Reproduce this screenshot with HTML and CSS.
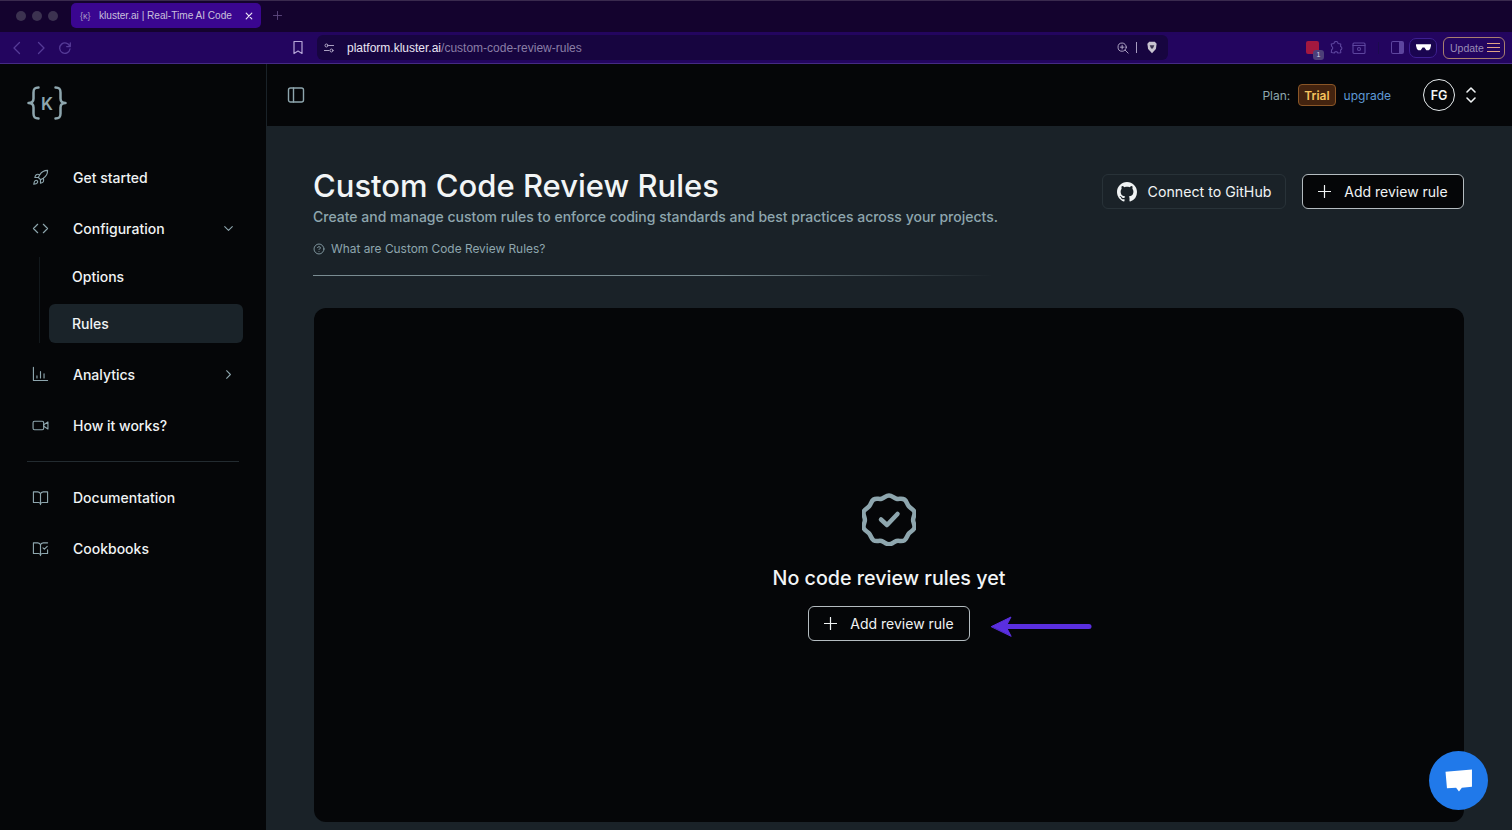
FILE: index.html
```html
<!DOCTYPE html>
<html>
<head>
  <title>kluster.ai | Real-Time AI Code Review</title>
  <link rel="stylesheet" href="styles.css">
</head>
<body>
  <div class="browser">
    <div class="tabbar">
      <div class="lights"><span></span><span></span><span></span></div>
      <div class="tab">
        <span class="tab-icon">{κ}</span>
        <span class="tab-title">kluster.ai | Real-Time AI Code</span>
        <svg class="tab-close" viewBox="0 0 10 10"><path d="M1.5 1.5l7 7M8.5 1.5l-7 7"/></svg>
      </div>
      <svg class="tab-new" viewBox="0 0 10 10"><path d="M5 .5v9M.5 5h9"/></svg>
    </div>
    <div class="toolbar">
      <div class="nav-btns">
        <svg viewBox="0 0 14 14"><path d="M9.5 1.5L4 7l5.5 5.5"/></svg>
        <svg viewBox="0 0 14 14"><path d="M4.5 1.5L10 7l-5.5 5.5"/></svg>
        <svg viewBox="0 0 14 14"><path d="M11.8 5.5A5.2 5.2 0 1 0 12 8M12.3 1.8v3.8H8.7"/></svg>
      </div>
      <svg class="bookmark" viewBox="0 0 12 15"><path d="M2 1.5h8v12L6 11l-4 2.500z"/></svg>
      <div class="urlbar">
        <svg class="url-tune" viewBox="0 0 12 12"><circle cx="3" cy="3" r="1.8"/><path d="M6 3h5.500M.5 9H6"/><circle cx="9" cy="9" r="1.8"/></svg>
        <span class="url"><b>platform.kluster.ai</b>/custom-code-review-rules</span>
        <svg class="url-zoom" viewBox="0 0 14 14"><circle cx="6" cy="6" r="4.8"/><path d="M9.5 9.5L13 13M6 3.8v4.4M3.8 6h4.4"/></svg>
        <span class="url-sep"></span>
        <svg class="url-shield" viewBox="0 0 12 14"><path d="M3 .8h6l2 2.2-.8 5.5L6 13.200 1.800 8.500 1 3z"/><path class="lion" d="M3.5 4.500h5L7 8H5z"/></svg>
      </div>
      <div class="extensions">
        <span class="ext-red"><span class="ext-badge">1</span></span>
        <svg class="ext-icon" viewBox="0 0 14 14"><path d="M5 2.500a2 2 0 0 1 4 0l2.800.5-.3 2.500a1.800 1.800 0 0 1 0 3.500l.3 2.800-3 .2a1.800 1.800 0 0 0-3.500 0l-3-.5.300-2.800a1.900 1.900 0 0 0 0-3.500L2.200 3z"/></svg>
        <svg class="ext-icon" viewBox="0 0 14 14"><rect x="1" y="2" width="12" height="10.5" rx="1"/><path d="M1 4.500h12"/><circle cx="7" cy="8" r="1.5"/></svg>
        <span class="ext-sep"></span>
        <span class="ext-panel"></span>
        <span class="ext-glasses">
          <svg viewBox="0 0 16 7"><path d="M0 0h16v1.500l-1 3.500-1.500 1.500H11L9 3.500H7L5 6.500H2.500L1 5 0 1.500z"/></svg>
        </span>
        <span class="ext-update">Update
          <span class="burger"><i></i><i></i><i></i></span>
        </span>
      </div>
    </div>
  </div>

  <div class="app">
    <aside class="sidebar">
      <div class="logo">
        <svg viewBox="0 0 40 34">
          <path d="M11.5 1.500C7.500 1.500 6.500 3 6.500 6.500v6c0 3-1.500 4.500-5 4.500 3.500 0 5 1.500 5 4.500v6c0 3.500 1 5 5 5"/>
          <path d="M28.500 1.500c4 0 5 1.500 5 5v6c0 3 1.500 4.500 5 4.500-3.500 0-5 1.500-5 4.500v6c0 3.500-1 5-5 5"/>
          <text class="logo-k" x="20" y="23.500">K</text>
        </svg>
      </div>
      <nav class="nav">
        <a class="nav-item">
          <svg class="nav-icon" viewBox="0 0 24 24"><path d="M4.5 16.500c-1.500 1.260-2 5-2 5s3.740-.5 5-2c.71-.84.7-2.130-.09-2.910a2.180 2.180 0 0 0-2.910-.09z"/><path d="M12 15l-3-3a22 22 0 0 1 2-3.950A12.880 12.880 0 0 1 22 2c0 2.720-.78 7.500-6 11a22.350 22.350 0 0 1-4 2z"/><path d="M9 12H4s.55-3.030 2-4c1.620-1.080 5 0 5 0M12 15v5s3.030-.55 4-2c1.080-1.620 0-5 0-5"/></svg>
          <span>Get started</span>
        </a>
        <a class="nav-item">
          <svg class="nav-icon" viewBox="0 0 24 24"><path d="M8 6l-6 6 6 6M16 6l6 6-6 6"/></svg>
          <span>Configuration</span>
          <svg class="nav-chevron" viewBox="0 0 24 24"><path d="M5 8.500l7 7 7-7"/></svg>
        </a>
        <div class="subnav">
          <a class="sub-item">Options</a>
          <a class="sub-item active">Rules</a>
        </div>
        <a class="nav-item">
          <svg class="nav-icon" viewBox="0 0 24 24"><path d="M2 2v18.500h20M7 14v3M12 8v9M17 11v6"/></svg>
          <span>Analytics</span>
          <svg class="nav-chevron" viewBox="0 0 24 24"><path d="M8.500 5l7 7-7 7"/></svg>
        </a>
        <a class="nav-item">
          <svg class="nav-icon" viewBox="0 0 24 24"><rect x="1.500" y="6" width="15" height="12" rx="2"/><path d="M16.500 11l6-4v10l-6-4z"/></svg>
          <span>How it works?</span>
        </a>
        <div class="nav-divider"></div>
        <a class="nav-item">
          <svg class="nav-icon" viewBox="0 0 24 24"><path d="M12 7a4 4 0 0 0-4-3H2v15h7a3 3 0 0 1 3 2.500 3 3 0 0 1 3-2.500h7V4h-6a4 4 0 0 0-4 3zM12 7v15"/></svg>
          <span>Documentation</span>
        </a>
        <a class="nav-item">
          <svg class="nav-icon" viewBox="0 0 24 24"><path d="M12 7a4 4 0 0 0-4-3H2v15h7a3 3 0 0 1 3 2.500 3 3 0 0 1 3-2.500h7v-5M22 4h-6a4 4 0 0 0-4 3v15M15.500 11l2 2 4-4"/></svg>
          <span>Cookbooks</span>
        </a>
      </nav>
    </aside>

    <div class="content">
      <header class="topbar">
        <svg class="panel-toggle" viewBox="0 0 18 18"><rect x="1.500" y="2" width="15" height="14" rx="2"/><path d="M6.500 2v14"/></svg>
        <div class="plan">
          <span class="plan-label">Plan:</span>
          <span class="plan-badge">Trial</span>
          <a class="plan-upgrade">upgrade</a>
        </div>
        <span class="avatar">FG</span>
        <svg class="avatar-toggle" viewBox="0 0 12 20"><path d="M2 7l4-4 4 4M2 13l4 4 4-4"/></svg>
      </header>

      <main class="page">
        <div class="page-head">
          <div class="page-intro">
            <h1>Custom Code Review Rules</h1>
            <p class="page-sub">Create and manage custom rules to enforce coding standards and best practices across your projects.</p>
            <a class="page-help">
              <svg viewBox="0 0 14 14"><circle cx="7" cy="7" r="5.800"/><path d="M5.300 5.400a1.750 1.750 0 0 1 3.400.5c0 1.100-1.700 1.500-1.700 1.500M7 9.900h.01"/></svg>
              What are Custom Code Review Rules?
            </a>
          </div>
          <div class="page-actions">
            <button class="btn btn-ghost">
              <svg class="gh" viewBox="0 0 16 16"><path d="M8 0C3.580 0 0 3.580 0 8c0 3.540 2.290 6.530 5.470 7.590.4.070.55-.17.55-.38 0-.19-.01-.82-.01-1.490-2.010.37-2.530-.49-2.690-.94-.09-.23-.48-.94-.82-1.130-.28-.15-.68-.52-.01-.53.63-.01 1.080.58 1.230.82.72 1.210 1.870.87 2.330.66.07-.52.28-.87.51-1.070-1.780-.2-3.640-.89-3.640-3.950 0-.87.31-1.590.82-2.150-.08-.2-.36-1.020.08-2.120 0 0 .67-.21 2.200.82.64-.18 1.320-.27 2-.27s1.360.09 2 .27c1.530-1.040 2.200-.82 2.200-.82.44 1.100.16 1.920.08 2.120.51.56.82 1.270.82 2.150 0 3.070-1.870 3.750-3.650 3.950.29.25.54.73.54 1.480 0 1.070-.01 1.930-.01 2.200 0 .21.15.46.55.38A8.010 8.010 0 0 0 16 8c0-4.420-3.580-8-8-8z"/></svg>
              Connect to GitHub
            </button>
            <button class="btn btn-dark">
              <svg class="plus" viewBox="0 0 14 14"><path d="M7 .5v13M.5 7h13"/></svg>
              Add review rule
            </button>
          </div>
        </div>
        <div class="page-rule"></div>

        <section class="empty-card">
          <svg class="empty-badge" viewBox="0 0 54 54"><path d="M27 3.500c3 0 4.800 2.700 7.400 3.300 2.700.6 5.600-.8 8 .7 2.400 1.500 2.600 4.700 4.400 6.800 1.800 2.100 4.900 2.900 5.600 5.700.7 2.700-1.300 5.100-1.300 7.900s2 5.200 1.300 7.900c-.7 2.800-3.800 3.600-5.600 5.700-1.800 2.100-2 5.300-4.400 6.800-2.400 1.500-5.300.1-8 .7-2.600.6-4.400 3.300-7.400 3.300s-4.800-2.700-7.400-3.300c-2.700-.6-5.600.8-8-.7-2.400-1.500-2.600-4.700-4.400-6.800-1.800-2.100-4.900-2.900-5.600-5.700-.7-2.700 1.300-5.100 1.300-7.900s-2-5.200-1.300-7.900c.7-2.800 3.800-3.600 5.600-5.700 1.800-2.100 2-5.300 4.400-6.800 2.400-1.500 5.300-.1 8-.7 2.600-.6 4.400-3.300 7.400-3.300z"/><path d="M19 27.500l6 5.500 10.500-11"/></svg>
          <h2>No code review rules yet</h2>
          <div class="empty-action">
            <button class="btn btn-dark btn-small">
              <svg class="plus" viewBox="0 0 14 14"><path d="M7 .5v13M.5 7h13"/></svg>
              Add review rule
            </button>
            <svg class="arrow" viewBox="0 0 102 22"><path class="arrow-line" d="M10 11.500h89"/><path class="arrow-head" d="M1.500 11.500L21 2 16 11.500 21 21z"/></svg>
          </div>
        </section>
      </main>
    </div>
  </div>

  <button class="chat">
    <svg viewBox="0 0 30 26"><path d="M1.500 4L29 1.500V19.500L18.500 20.500 15.500 24.500 12.500 20.500 3 21z"/></svg>
  </button>
</body>
</html>
```

FILE: styles.css
```css
* {
  box-sizing: border-box;
}
html, body {
  height: 100%;
}
body {
  margin: 0;
  height: 830px;
  overflow: hidden;
  background: #050608;
  font-family: Inter, "Open Sans", sans-serif;
  color: #f2f5f6;
  display: flex;
  flex-direction: column;
}
svg {
  display: block;
  flex: none;
  fill: none;
  stroke: currentColor;
  stroke-linecap: round;
  stroke-linejoin: round;
}
button {
  font-family: inherit;
  cursor: pointer;
}

/* browser chrome */
.browser {
  flex: none;
}
.tabbar {
  height: 32px;
  background: #14032e;
  display: flex;
  align-items: center;
  padding: 0 0 1px 16px;
  box-shadow: inset 0 1px 0 #3a2a4e;
}
.lights {
  display: flex;
  gap: 6px;
  margin-right: 13px;
}
.lights span {
  width: 10px;
  height: 10px;
  border-radius: 50%;
  background: #3c3250;
}
.tab {
  width: 190px;
  height: 25px;
  background: #3a0690;
  border-radius: 5px;
  display: flex;
  align-items: center;
  padding: 0 8px 0 9px;
  font-family: "Liberation Sans", sans-serif;
  font-size: 10.1px;
  color: #c9c0dc;
}
.tab-icon {
  width: 19px;
  font-size: 9px;
  color: #a99ac6;
}
.tab-title {
  flex: 1;
  white-space: nowrap;
}
.tab-close {
  width: 8px;
  height: 8px;
  margin-left: 9px;
  color: #ece6f6;
  stroke-width: 1.5;
}
.tab-new {
  width: 9px;
  height: 9px;
  margin-left: 12px;
  color: #5d4a80;
  stroke-width: 1;
}
.toolbar {
  height: 32px;
  background: #23055f;
  border-bottom: 1px solid #452a84;
  display: flex;
  align-items: center;
  padding: 0 7px 0 10px;
}
.nav-btns {
  display: flex;
  gap: 10px;
  width: 282px;
  color: #553b97;
}
.nav-btns svg {
  width: 14px;
  height: 14px;
  stroke-width: 1.3;
}
.bookmark {
  width: 12px;
  height: 15px;
  color: #b6a6d8;
  stroke-width: 1.2;
}
.urlbar {
  width: 851px;
  height: 25px;
  margin-left: 13px;
  background: #170540;
  border-radius: 6px;
  display: flex;
  align-items: center;
  padding: 0 10px 0 7px;
  font-family: "Liberation Sans", sans-serif;
}
.url-tune {
  width: 10px;
  height: 10px;
  color: #c9c0dc;
  stroke-width: 1;
}
.url {
  flex: 1;
  margin-left: 13px;
  font-size: 12px;
  color: #8a7ea6;
}
.url b {
  font-weight: 400;
  color: #ebe6f4;
}
.url-zoom {
  width: 12px;
  height: 12px;
  color: #c2b9d6;
  stroke-width: 1;
}
.url-sep {
  width: 1px;
  height: 11px;
  margin: 0 9px 0 7px;
  background: #a79cc0;
}
.url-shield {
  width: 12px;
  height: 13px;
  fill: #c8c4d0;
  stroke: none;
}
.url-shield .lion {
  fill: #3b3550;
}
.extensions {
  flex: 1;
  display: flex;
  align-items: center;
  justify-content: flex-end;
}
.ext-red {
  position: relative;
  width: 13px;
  height: 13px;
  background: #a3183f;
  border-radius: 2px;
  margin-right: 6px;
}
.ext-badge {
  position: absolute;
  right: -5px;
  bottom: -6px;
  width: 11px;
  height: 10px;
  border-radius: 3px;
  background: #4c3f78;
  color: #d9d4e6;
  font-size: 7px;
  line-height: 10px;
  text-align: center;
  font-family: "Liberation Sans", sans-serif;
}
.ext-icon {
  width: 14px;
  height: 14px;
  margin-left: 4px;
  margin-right: 5px;
  color: #5d459e;
  stroke-width: 1.1;
}
.ext-sep {
  width: 1px;
  height: 12px;
  margin: 0 12px 0 7px;
  background: #1c0b4e;
}
.ext-panel {
  width: 13px;
  height: 13px;
  border: 1px solid #5d459e;
  border-right-width: 5px;
  border-radius: 2px;
}
.ext-glasses {
  width: 28px;
  height: 20px;
  margin: 0 6px 0 5px;
  border: 1px solid #3d2090;
  border-radius: 7px;
  background: #1a0550;
  display: flex;
  align-items: center;
  justify-content: center;
}
.ext-glasses svg {
  width: 15px;
  height: 7px;
  fill: #fff;
  stroke: none;
}
.ext-update {
  width: 62px;
  height: 22px;
  border: 1px solid #a8806f;
  border-radius: 6px;
  display: flex;
  align-items: center;
  justify-content: space-between;
  padding: 0 4px 0 6px;
  font-family: "Liberation Sans", sans-serif;
  font-size: 10.5px;
  color: #9a8cb6;
}
.burger {
  display: flex;
  flex-direction: column;
  gap: 3px;
  width: 13px;
}
.burger i {
  height: 1px;
  background: #e0a484;
}

/* app layout */
.app {
  flex: 1;
  min-height: 0;
  display: flex;
}
.sidebar {
  width: 267px;
  flex: none;
  background: #050608;
  border-right: 1px solid #1a2228;
  padding: 0 23px 0 27px;
}
.logo {
  height: 78px;
  display: flex;
  align-items: center;
  color: #8ea6ae;
  margin-bottom: 10px;
}
.logo svg {
  width: 40px;
  height: 34px;
  margin-bottom: 1px;
  stroke-width: 2.5;
}
.logo-k {
  font-family: Inter, sans-serif;
  font-size: 17px;
  font-weight: 600;
  text-anchor: middle;
  fill: #8ea6ae;
  stroke: none;
}
.nav {
  display: flex;
  flex-direction: column;
}
.nav-item {
  height: 51px;
  display: flex;
  align-items: center;
  gap: 24px;
  font-size: 14px;
  font-weight: 500;
  color: #f0f3f4;
}
.nav-icon {
  width: 17px;
  height: 17px;
  margin-left: 5px;
  color: #8ea6ae;
  stroke-width: 1.6;
}
.nav-item span {
  flex: 1;
}
.nav-chevron {
  width: 13px;
  height: 13px;
  margin-right: 8px;
  color: #8ea6ae;
  stroke-width: 2;
}
.subnav {
  margin-left: 12px;
  padding-left: 9px;
  border-left: 1px solid #12181c;
  display: flex;
  flex-direction: column;
  gap: 8px;
  margin-top: 3px;
  margin-bottom: 6px;
}
.sub-item {
  height: 39px;
  display: flex;
  align-items: center;
  padding: 0 0 1px 23px;
  border-radius: 6px;
  font-size: 14px;
  font-weight: 500;
  color: #f0f3f4;
}
.sub-item.active {
  background: #1a2329;
}
.nav-divider {
  height: 1px;
  margin: 10px 4px 10px 0;
  background: #232b30;
}

/* main area */
.content {
  flex: 1;
  min-width: 0;
  background: #1a2228;
  display: flex;
  flex-direction: column;
}
.topbar {
  height: 62px;
  flex: none;
  background: #050608;
  display: flex;
  align-items: center;
  padding: 0 35px 0 20px;
}
.panel-toggle {
  width: 18px;
  height: 18px;
  color: #8ea6ae;
  stroke-width: 1.4;
  margin-right: auto;
}
.plan {
  display: flex;
  align-items: center;
  font-size: 12px;
}
.plan-label {
  color: #8ea6ae;
}
.plan-badge {
  margin-left: 8px;
  height: 22px;
  padding: 0 5px;
  display: flex;
  align-items: center;
  background: #43230f;
  border: 1px solid #8a5526;
  border-radius: 4px;
  color: #f5c45e;
  font-weight: 600;
}
.plan-upgrade {
  margin-left: 8px;
  color: #5f9ad6;
}
.avatar {
  width: 32px;
  height: 32px;
  margin-left: 32px;
  border: 1px solid #e7ecee;
  border-radius: 50%;
  display: flex;
  align-items: center;
  justify-content: center;
  font-size: 12.5px;
  font-weight: 600;
}
.avatar-toggle {
  width: 12px;
  height: 20px;
  margin-left: 10px;
  color: #f0f3f4;
  stroke-width: 1.6;
}
.page {
  flex: 1;
  min-height: 0;
  padding: 41px 48px 8px 47px;
  display: flex;
  flex-direction: column;
}
.page-head {
  display: flex;
  justify-content: space-between;
  align-items: flex-start;
}
.page-intro {
  margin-left: -1px;
}
h1 {
  margin: 0;
  font-size: 31px;
  line-height: 38px;
  font-weight: 500;
  color: #f2f5f6;
}
.page-sub {
  margin: 2px 0 0;
  font-size: 14px;
  line-height: 20px;
  font-weight: 500;
  color: #8ea6ae;
}
.page-help {
  margin-top: 14px;
  display: flex;
  align-items: center;
  gap: 6px;
  font-size: 11.9px;
  color: #8ea6ae;
}
.page-help svg {
  width: 12px;
  height: 12px;
  stroke-width: 1;
}
.page-actions {
  display: flex;
  gap: 16px;
  margin-top: 7px;
}
.btn {
  height: 35px;
  display: flex;
  align-items: center;
  gap: 11px;
  border-radius: 6px;
  font-size: 14px;
  color: #f0f3f4;
}
.btn-ghost {
  width: 184px;
  justify-content: center;
  background: transparent;
  border: 1px solid #283238;
  font-size: 14.2px;
}
.gh {
  width: 20px;
  height: 20px;
  fill: #f0f3f4;
  stroke: none;
}
.btn-dark {
  width: 162px;
  justify-content: center;
  gap: 13px;
  background: #050608;
  border: 1px solid #b4bcc0;
}
.plus {
  width: 13px;
  height: 13px;
  stroke-width: 1.3;
}
.page-rule {
  height: 1px;
  width: 680px;
  margin: 19px 0 0 -1px;
  background: linear-gradient(90deg, #7a8c92, #7a8c92 60%, #1a2228);
  flex: none;
}
.empty-card {
  flex: 1;
  min-height: 0;
  margin-top: 32px;
  background: #050608;
  border-radius: 12px;
  display: flex;
  flex-direction: column;
  align-items: center;
  padding-top: 184px;
}
.empty-badge {
  width: 54px;
  height: 54px;
  color: #8ea6ae;
  stroke-width: 4.5;
}
h2 {
  margin: 20px 0 0;
  font-size: 19.7px;
  line-height: 24px;
  font-weight: 500;
  color: #f2f5f6;
}
.empty-action {
  position: relative;
  margin-top: 16px;
}
.arrow {
  position: absolute;
  left: 182px;
  top: 9px;
  width: 102px;
  height: 22px;
}
.arrow-line {
  stroke: #5a2fe0;
  stroke-width: 5;
}
.arrow-head {
  fill: #5a2fe0;
  stroke: #5a2fe0;
  stroke-width: 1;
}
.chat {
  position: absolute;
  left: 1429px;
  top: 751px;
  width: 59px;
  height: 59px;
  border: 0;
  border-radius: 50%;
  background: #2079ea;
  display: flex;
  align-items: center;
  justify-content: center;
}
.chat svg {
  width: 29px;
  height: 25px;
  fill: #fff;
  stroke: none;
}
```
